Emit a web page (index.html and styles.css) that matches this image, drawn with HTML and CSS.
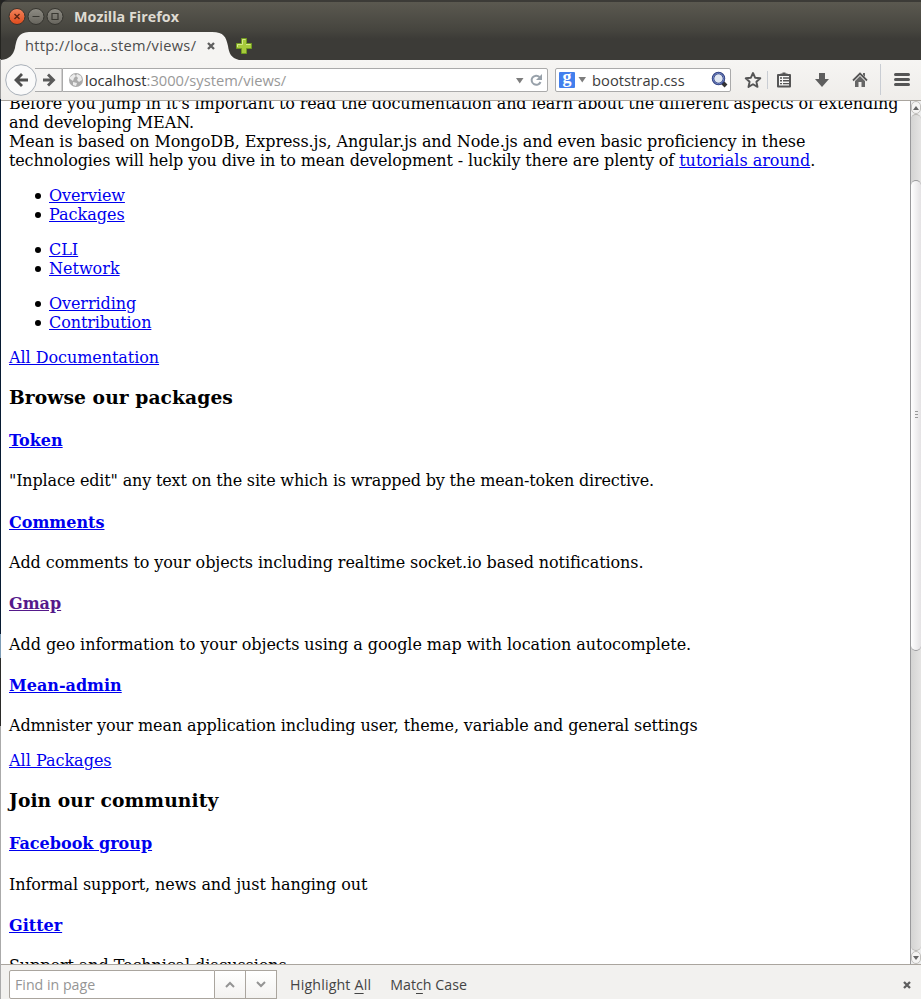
FILE: index.html
```html
<!DOCTYPE html>
<html lang="en">
<head>
<meta charset="utf-8">
<title>Mozilla Firefox</title>
<link rel="stylesheet" href="styles.css">
</head>
<body>
<div class="window">
  <header class="titlebar">
    <svg class="controls" width="60" height="18" viewBox="0 0 60 18">
      <defs>
        <linearGradient id="red" x2="0" y2="1"><stop stop-color="#f4845c"/><stop offset="1" stop-color="#df4a1b"/></linearGradient>
        <linearGradient id="gray" x2="0" y2="1"><stop stop-color="#8f8d84"/><stop offset="1" stop-color="#66645d"/></linearGradient>
      </defs>
      <g stroke="#34332e"><circle cx="9" cy="8.500" r="8" fill="url(#red)"/><circle cx="28" cy="8.500" r="8" fill="url(#gray)"/><circle cx="47" cy="8.500" r="8" fill="url(#gray)"/></g>
      <path d="M6.500 6l5 5M11.500 6l-5 5" stroke="#5b2413" stroke-width="1.400"/>
      <path d="M24.500 8.500h7M44 5.500h6v6h-6z" fill="none" stroke="#393832" stroke-width="1.200"/>
    </svg>
    <span class="title">Mozilla Firefox</span>
  </header>
  <div class="tabs">
    <div class="tab">
      <svg class="tab-shape" width="230" height="29" viewBox="0 0 230 29"><path d="M0 29C9 28 12 24 14 17C16 6 18 1 30 1H211C223 1 225 6 227 15C228 22 230 27 238 29Z" fill="#f5f4f2"/></svg>
      <span class="tab-title">http://loca…stem/views/</span>
      <svg class="tab-close" width="10" height="10" viewBox="0 0 10 10"><path d="M2 2l6 6M8 2l-6 6" stroke="#5e5e5e" stroke-width="2.300"/></svg>
    </div>
    <svg class="add" width="18" height="18" viewBox="0 0 18 18"><path d="M6.500 1.500h5v5h5v5h-5v5h-5v-5h-5v-5h5z" fill="#a7cb3b" stroke="#719b20"/><path d="M7.500 7.500v-5h3M2.500 10v-2.500h5M11 7.500h4.500" fill="none" stroke="#d6e98b"/></svg>
  </div>
  <nav class="toolbar">
    <svg class="navigation" width="62" height="34" viewBox="0 0 62 34">
      <path d="M30 5.500h27v23H30" fill="#f5f4f3" stroke="#aaa"/>
      <circle cx="16" cy="17" r="15.300" fill="#fafafa" stroke="#a9b0b9"/>
      <path d="M9 17l7-7 2 2-3.500 3.500H23v3h-8.500L18 22l-2 2z" fill="#4f4f4f"/>
      <path d="M50.500 17l-6.500-6.500-2 2 3 3H38v3h7l-3 3 2 2z" fill="#5a5a5a"/>
    </svg>
    <div class="address">
      <svg width="16" height="16" viewBox="0 0 16 16"><circle cx="8" cy="8" r="7" fill="#aaa"/><path d="M2 5l4-3 2 2-2 2-1 3-3-2zM9 2l4 2 1 4-3 2-2-2 1-2-2-2zM5 10l4 1-1 3-3-1z" fill="#ececec"/></svg>
      <span class="url"><b>localhost</b>:3000/system/views/</span>
      <svg class="address-tools" width="32" height="16" viewBox="0 0 32 16"><path d="M1 6h7.500L4.750 11.500z" fill="#7d7d7d"/><path d="M24.500 5a4.600 4.600 0 1 0 1 5" fill="none" stroke="#98a1aa" stroke-width="2"/><path d="M27 2v6h-6z" fill="#98a1aa"/></svg>
    </div>
    <div class="search">
      <span class="google">g</span>
      <svg width="9" height="6" viewBox="0 0 9 6"><path d="M.5 0h7.500L4.250 5.500z" fill="#7d7d7d"/></svg>
      <span class="query">bootstrap.css</span>
      <svg class="magnifier" width="18" height="18" viewBox="0 0 18 18"><path d="M11 11l4 4" stroke="#333" stroke-width="4"/><circle cx="7.500" cy="7.500" r="5.500" fill="#e0e7f2" stroke="#29397b" stroke-width="2.500"/><circle cx="7.500" cy="7.500" r="5.400" fill="none" stroke="#7d92ce"/></svg>
    </div>
    <svg class="actions" width="184" height="34" viewBox="0 0 184 34">
      <path d="M15 10l2.100 4.700 5.200.6-3.900 3.500 1.100 5.100-4.500-2.600-4.500 2.600 1.100-5.100-3.900-3.500 5.200-.6z" fill="none" stroke="#555" stroke-width="1.900" stroke-linejoin="round"/>
      <path d="M29.500 8v18M142.500 1v31" stroke="#c9cdd3"/>
      <path d="M40 12h12v11.500H40z" fill="#f7f7f6" stroke="#555" stroke-width="2" stroke-linejoin="round"/><path d="M42.500 12V10.500h2V9.500h3v1h2V12z" fill="#555"/><path d="M42 15h2m1 0h6M42 17.800h2m1 0h6M42 20.600h2m1 0h6" fill="none" stroke="#555" stroke-width="1.400"/>
      <path d="M81 10h6v6h4l-7 8-7-8h4z" fill="#5e5e5e"/>
      <path d="M115 17.500l7-7 7 7" fill="none" stroke="#555" stroke-width="1.800"/><path d="M117 18l5-5 5 5v6h-3.500v-5h-3v5H117zM125 10h2v4l-2-2z" fill="#666"/>
      <path d="M157.500 11.500h13M157.500 16.500h13M157.500 21.500h13" stroke="#555" stroke-width="3" stroke-linecap="round"/>
    </svg>
  </nav>
  <div class="viewport">
    <main class="page">
      <div><span class="tight">Before you jump in it's important to read the documentation and learn about the different aspects of extending</span><br><span class="snug">and developing MEAN.</span><br><span class="snug">Mean is based on MongoDB, Express.js, Angular.js and Node.js and even basic proficiency in these</span><br><span class="tighter">technologies will help you dive in to mean development - luckily there are plenty of</span> <a href="#">tutorials around</a>.</div>
      <ul><li><a class="snug" href="#">Overview</a></li><li><a href="#">Packages</a></li></ul>
      <ul><li><a href="#">CLI</a></li><li><a href="#">Network</a></li></ul>
      <ul><li><a class="snug" href="#">Overriding</a></li><li><a class="snug" href="#">Contribution</a></li></ul>
      <a class="light" href="#">All Documentation</a>
      <h3>Browse our packages</h3>
      <h4><a href="#">Token</a></h4><p class="tightest">"Inplace edit" any text on the site which is wrapped by the mean-token directive.</p>
      <h4><a href="#">Comments</a></h4><p class="snug">Add comments to your objects including realtime socket.io based notifications.</p>
      <h4><a class="visited" href="#">Gmap</a></h4><p class="light">Add geo information to your objects using a google map with location autocomplete.</p>
      <h4><a href="#">Mean-admin</a></h4><p class="tight">Admnister your mean application including user, theme, variable and general settings</p>
      <a href="#">All Packages</a>
      <h3>Join our community</h3>
      <h4><a href="#">Facebook group</a></h4><p class="snug">Informal support, news and just hanging out</p>
      <h4><a href="#">Gitter</a></h4><p class="snug">Support and Technical discussions</p>
    </main>
    <aside class="scrollbar">
      <div class="arrow"><svg width="6" height="4"><path d="M0 4l3-4 3 4z" fill="#666"/></svg></div>
      <div class="track"><div class="thumb"><i></i><i></i><i></i></div></div>
      <div class="arrow"><svg width="6" height="4"><path d="M0 0h6L3 4z" fill="#666"/></svg></div>
    </aside>
  </div>
  <footer class="findbar">
    <div class="find-field"><span>Find in page</span></div>
    <div class="find-button"><svg width="10" height="7" viewBox="0 0 10 7"><path d="M1 6l4-4 4 4" fill="none" stroke="#949494" stroke-width="2"/></svg></div>
    <div class="find-button"><svg width="10" height="7" viewBox="0 0 10 7"><path d="M1 1l4 4 4-4" fill="none" stroke="#949494" stroke-width="2"/></svg></div>
    <span class="highlight">Highlight <u>A</u>ll</span><span class="match">Mat<u>c</u>h Case</span>
    <svg class="find-close" width="10" height="10" viewBox="0 0 10 10"><path d="M2 2l6 6M8 2l-6 6" stroke="#5e5e5e" stroke-width="2.300"/></svg>
  </footer>
</div>
</body>
</html>
```
FILE: styles.css
```css
* { box-sizing: border-box; }
body { margin: 0; background: #222; overflow: hidden; }
svg { display: block; flex: none; }
.window { width: 921px; height: 999px; display: flex; flex-direction: column; border-left: 1px solid #8b8b8b; border-image: linear-gradient(#242420 0 60px, #999 60px 100px, #071a32 100px 634px, #7c9bb4 634px 658px, #2a2a28 658px 726px, #aaa 726px 100%) 1; font-family: "Open Sans", sans-serif; }
.titlebar { height: 31px; flex: none; padding: 3px 0 0 6px; display: flex; align-items: center; background: linear-gradient(#3c3b37 0 2px, #5b5950 2px, #45443e); border-radius: 7px 0 0; }
.controls { margin-left: 1px; margin-top: -1px; }
.title { margin-left: 6px; margin-top: -1px; color: #dfdbd2; font: bold 14.3px/24px "Open Sans", sans-serif; letter-spacing: .03px; white-space: nowrap; }
.tabs { height: 29px; flex: none; display: flex; background: linear-gradient(#45443e, #3c3b37 8px); }
.tab { width: 230px; display: grid; grid-template-columns: 24px 185px 21px; align-items: center; }
.tab-shape { grid-area: 1 / 1 / 2 / 4; overflow: visible; }
.tab-title { grid-area: 1 / 2; padding-bottom: 2px; color: #4c4c4c; font-size: 14.6px; letter-spacing: .33px; line-height: 20px; white-space: nowrap; }
.tab-close { grid-area: 1 / 3; margin-left: -4px; }
.add { margin: 6px 0 0 4px; }
.toolbar { height: 41px; flex: none; display: flex; align-items: center; background: linear-gradient(#f6f5f3, #efedea); border-bottom: 1px solid #aaa59e; padding: 0 0 1px 4px; }
.navigation { margin-right: -5px; }
.address { width: 486px; height: 24px; display: flex; align-items: center; background: #fff; border: 1px solid #aaa; border-radius: 0 2px 2px 0; padding-left: 5px; }
.url { margin-left: 1px; font-size: 14.7px; color: #999; white-space: nowrap; }
.url b { font-weight: 400; color: #333; }
.address-tools { margin-left: auto; }
.search { width: 176px; height: 24px; margin-left: 7px; display: flex; align-items: center; border: 1px solid #aaa; border-radius: 2px; background: #fff; padding-left: 3px; }
.google { width: 16px; height: 16px; margin-right: 3px; border-radius: 1px; background: #427fed; color: #fff; font: bold 18px/11px "Liberation Serif", serif; text-align: center; }
.query { margin-left: 5px; color: #3c3c3c; font-size: 14.7px; letter-spacing: .04px; white-space: nowrap; }
.magnifier { margin-left: auto; margin-right: 1px; }
.actions { margin: 0 -4px 0 7px; }
.viewport { height: 863px; display: flex; overflow: hidden; background: #fff; }
.page { width: 909px; padding-left: 8px; margin-top: -7px; font: 16px/19px "DejaVu Serif", serif; color: #000; white-space: nowrap; }
.tightest { letter-spacing: -.16px; }
.tighter { letter-spacing: -.137px; }
.tight { letter-spacing: -.125px; }
.snug { letter-spacing: -.087px; }
.light { letter-spacing: -.055px; }
.page ul { margin: 16px 0; padding-left: 25px; list-style: none; }
.page li { display: flex; align-items: center; }
.page li::before { content: ""; width: 6px; height: 6px; margin-right: 8px; margin-left: 1px; border-radius: 50%; background: #000; }
.page a { color: #00e; text-decoration: underline; }
.page .visited { color: #551a8b; }
.page h3 { margin: 18.72px 0; padding-bottom: 1px; font-size: 18.72px; line-height: 22px; letter-spacing: .06px; }
.page h4 { margin: 21.33px 0; padding-top: 1px; font-size: 16px; line-height: 19px; }
.page p { margin: 16px 0; }
.scrollbar { width: 11px; display: flex; flex-direction: column; background: #eee; border-left: 1px solid #99999b; }
.arrow { height: 13px; display: grid; place-items: center; border: 1px solid #c1bfbc; border-radius: 5px; background: #f5f4f3; }
.track { height: 837px; padding-top: 65px; border: solid #b7b5b2; border-width: 1px 0; border-radius: 7px; background: linear-gradient(90deg, #d4d4d3, #e5e4e3); }
.thumb { height: 471px; padding-bottom: 3px; border: 1px solid #99999b; border-width: 1px 0; border-radius: 7px; background: linear-gradient(90deg, #fff, #e4e2e4); display: flex; flex-direction: column; gap: 2px; align-items: center; justify-content: center; }
.thumb i { width: 3px; height: 1px; background: #999; }
.findbar { height: 35px; border-top: 1px solid #aaa59e; background: #f2f1ef; padding: 5px 0 0 8px; display: flex; align-items: flex-start; font-size: 14.2px; line-height: 29px; color: #444; white-space: nowrap; }
.find-field { width: 206px; height: 29px; border: 1px solid #aaa59e; border-radius: 2px 0 0 2px; background: #fff; color: #959595; padding-left: 5px; line-height: 27px; }
.find-button { width: 31px; height: 29px; border: 1px solid #aaa59e; border-left: 0; background: linear-gradient(#fff, #f3f2f0); display: grid; place-items: center; }
.highlight { margin-left: 13px; letter-spacing: .17px; }
.match { margin-left: 19px; letter-spacing: .05px; }
.findbar u { text-underline-offset: 3px; }
.find-close { margin: 10px 9px 0 auto; }
```
